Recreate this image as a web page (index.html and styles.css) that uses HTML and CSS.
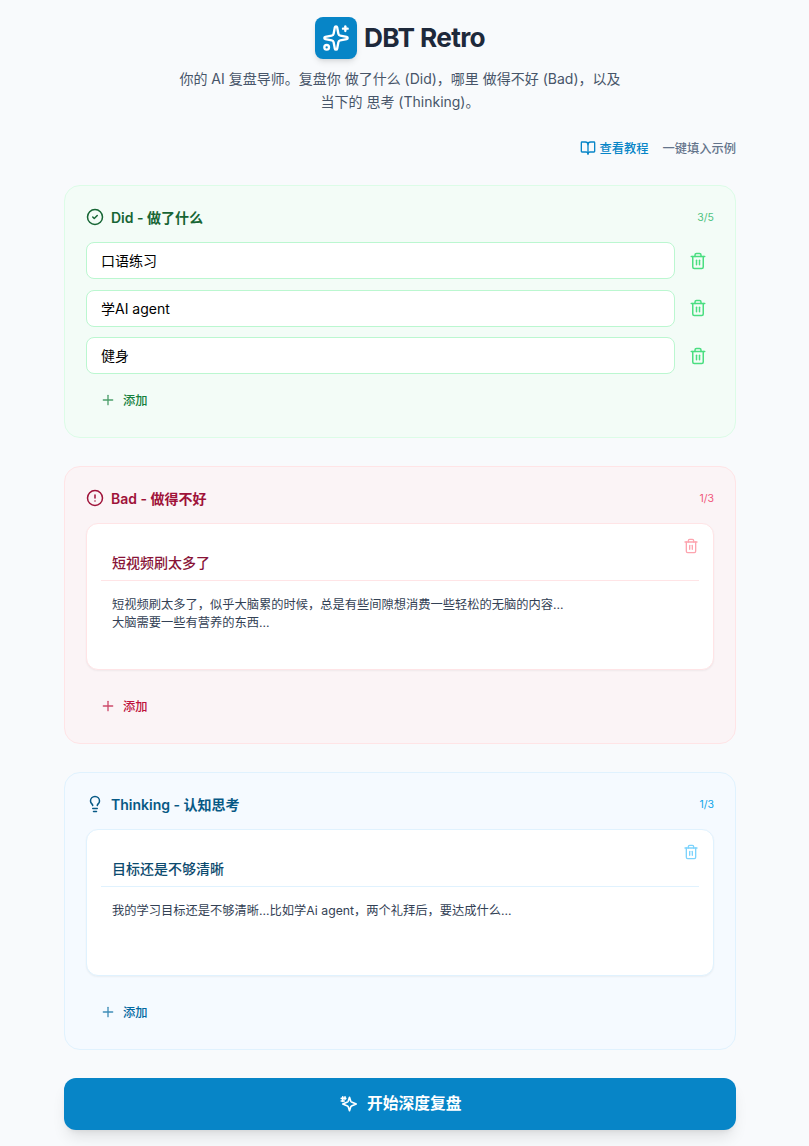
FILE: index.html
```html
<!DOCTYPE html>
<html lang="zh">
<head>
<meta charset="utf-8">
<title>DBT Retro</title>
<link rel="stylesheet" href="styles.css">
</head>
<body>
<main class="page">
  <header class="header">
    <div class="brand">
      <span class="logo">
        <svg class="i" width="28" height="28" viewBox="0 0 24 24"><path d="M11.017 2.814a1 1 0 0 1 1.966 0l1.051 5.558a2 2 0 0 0 1.594 1.594l5.558 1.051a1 1 0 0 1 0 1.966l-5.558 1.051a2 2 0 0 0-1.594 1.594l-1.051 5.558a1 1 0 0 1-1.966 0l-1.051-5.558a2 2 0 0 0-1.594-1.594l-5.558-1.051a1 1 0 0 1 0-1.966l5.558-1.051a2 2 0 0 0 1.594-1.594z"/><path d="M20 2v4"/><path d="M22 4h-4"/><circle cx="4" cy="20" r="2"/></svg>
      </span>
      <h1 class="brand-name">DBT Retro</h1>
    </div>
    <p class="lead">你的 AI 复盘导师。复盘你 做了什么 (Did)，哪里 做得不好 (Bad)，以及<br>当下的 思考 (Thinking)。</p>
  </header>

  <nav class="tools">
    <a class="tool tool-blue">
      <svg class="i" width="16" height="16" viewBox="0 0 24 24"><path d="M12 7v14"/><path d="M3 18a1 1 0 0 1-1-1V4a1 1 0 0 1 1-1h5a4 4 0 0 1 4 4 4 4 0 0 1 4-4h5a1 1 0 0 1 1 1v13a1 1 0 0 1-1 1h-6a3 3 0 0 0-3 3 3 3 0 0 0-3-3z"/></svg>
      查看教程
    </a>
    <a class="tool">一键填入示例</a>
  </nav>

  <section class="panel did">
    <div class="panel-head">
      <h2 class="panel-title">
        <svg class="i" width="18" height="18" viewBox="0 0 24 24"><circle cx="12" cy="12" r="10"/><path d="m9 12 2 2 4-4"/></svg>
        Did - 做了什么
      </h2>
      <span class="count">3/5</span>
    </div>
    <div class="rows">
      <div class="row">
        <div class="field">口语练习</div>
        <svg class="i trash" width="18" height="18" viewBox="0 0 24 24"><path d="M3 6h18"/><path d="M19 6v14c0 1-1 2-2 2H7c-1 0-2-1-2-2V6"/><path d="M8 6V4c0-1 1-2 2-2h4c1 0 2 1 2 2v2"/><path d="M10 11v6"/><path d="M14 11v6"/></svg>
      </div>
      <div class="row">
        <div class="field">学AI agent</div>
        <svg class="i trash" width="18" height="18" viewBox="0 0 24 24"><path d="M3 6h18"/><path d="M19 6v14c0 1-1 2-2 2H7c-1 0-2-1-2-2V6"/><path d="M8 6V4c0-1 1-2 2-2h4c1 0 2 1 2 2v2"/><path d="M10 11v6"/><path d="M14 11v6"/></svg>
      </div>
      <div class="row">
        <div class="field">健身</div>
        <svg class="i trash" width="18" height="18" viewBox="0 0 24 24"><path d="M3 6h18"/><path d="M19 6v14c0 1-1 2-2 2H7c-1 0-2-1-2-2V6"/><path d="M8 6V4c0-1 1-2 2-2h4c1 0 2 1 2 2v2"/><path d="M10 11v6"/><path d="M14 11v6"/></svg>
      </div>
    </div>
    <div class="add">
      <svg class="i plus" width="16" height="16" viewBox="0 0 24 24"><path d="M5 12h14"/><path d="M12 5v14"/></svg>
      添加
    </div>
  </section>

  <section class="panel bad">
    <div class="panel-head">
      <h2 class="panel-title">
        <svg class="i" width="18" height="18" viewBox="0 0 24 24"><circle cx="12" cy="12" r="10"/><path d="M12 8v4"/><path d="M12 16h.01"/></svg>
        Bad - 做得不好
      </h2>
      <span class="count">1/3</span>
    </div>
    <article class="card">
      <svg class="i card-trash" width="16" height="16" viewBox="0 0 24 24"><path d="M3 6h18"/><path d="M19 6v14c0 1-1 2-2 2H7c-1 0-2-1-2-2V6"/><path d="M8 6V4c0-1 1-2 2-2h4c1 0 2 1 2 2v2"/><path d="M10 11v6"/><path d="M14 11v6"/></svg>
      <h3 class="card-title">短视频刷太多了</h3>
      <p class="card-text">短视频刷太多了，似乎大脑累的时候，总是有些间隙想消费一些轻松的无脑的内容...<br>大脑需要一些有营养的东西...</p>
    </article>
    <div class="add">
      <svg class="i plus" width="16" height="16" viewBox="0 0 24 24"><path d="M5 12h14"/><path d="M12 5v14"/></svg>
      添加
    </div>
  </section>

  <section class="panel thinking">
    <div class="panel-head">
      <h2 class="panel-title">
        <svg class="i" width="18" height="18" viewBox="0 0 24 24"><path d="M15 14c.2-1 .7-1.7 1.5-2.5 1-.9 1.5-2.2 1.5-3.5A6 6 0 0 0 6 8c0 1 .2 2.2 1.5 3.500.7.7 1.3 1.500 1.500 2.500"/><path d="M9 18h6"/><path d="M10 22h4"/></svg>
        Thinking - 认知思考
      </h2>
      <span class="count">1/3</span>
    </div>
    <article class="card">
      <svg class="i card-trash" width="16" height="16" viewBox="0 0 24 24"><path d="M3 6h18"/><path d="M19 6v14c0 1-1 2-2 2H7c-1 0-2-1-2-2V6"/><path d="M8 6V4c0-1 1-2 2-2h4c1 0 2 1 2 2v2"/><path d="M10 11v6"/><path d="M14 11v6"/></svg>
      <h3 class="card-title">目标还是不够清晰</h3>
      <p class="card-text">我的学习目标还是不够清晰...比如学Ai agent，两个礼拜后，要达成什么...</p>
    </article>
    <div class="add">
      <svg class="i plus" width="16" height="16" viewBox="0 0 24 24"><path d="M5 12h14"/><path d="M12 5v14"/></svg>
      添加
    </div>
  </section>

  <button class="start" type="button">
    <svg class="i start-icon" width="18" height="18" viewBox="0 0 24 24"><path d="M14 3l1.700 5.300a2 2 0 0 0 1 1L23 12l-6.300 2.700a2 2 0 0 0-1 1L14 21l-1.700-5.300a2 2 0 0 0-1-1L5 12l6.300-2.700a2 2 0 0 0 1-1z"/><path d="M3 4.500h6"/><path d="M3 8h4"/><path d="M5 2.500v6"/><path d="M8 2.500v3"/></svg>
    <span class="start-label">开始深度复盘</span>
  </button>
</main>
</body>
</html>
```
FILE: styles.css
```css
* { box-sizing: border-box; }

html, body {
  margin: 0;
  height: 1146px;
  overflow: hidden;
  background: #f8fafc;
}

body {
  font-family: Inter, "Noto Sans CJK SC", sans-serif;
  color: #1e293b;
}

.i {
  fill: none;
  stroke: currentColor;
  stroke-width: 2;
  stroke-linecap: round;
  stroke-linejoin: round;
  flex: none;
  display: block;
}

.page {
  width: 800px;
  padding: 17px 64px 0;
  display: flex;
  flex-direction: column;
}

.header {
  display: flex;
  flex-direction: column;
  align-items: center;
}

.brand {
  display: flex;
  align-items: center;
  gap: 7px;
}

.logo {
  width: 42px;
  height: 42px;
  border-radius: 8px;
  background: #0785c7;
  color: #fff;
  display: flex;
  align-items: center;
  justify-content: center;
  box-shadow: 0 4px 6px -1px rgba(0, 0, 0, .1), 0 2px 4px -2px rgba(0, 0, 0, .1);
}

.brand-name {
  margin: 0;
  font-size: 26.25px;
  line-height: 42px;
  font-weight: 700;
  letter-spacing: -.656px;
  color: #1e293b;
}

.lead {
  margin: 9px 0 0;
  font-size: 14px;
  line-height: 22.75px;
  color: #475569;
  text-align: center;
}

.tools {
  display: flex;
  justify-content: flex-end;
  gap: 14px;
  margin-top: 24.5px;
  height: 20px;
  align-items: center;
}

.tool {
  display: flex;
  align-items: center;
  gap: 3.5px;
  font-size: 12.25px;
  font-weight: 500;
  color: #64748b;
}

.tool-blue { color: #0785c7; }

.panel {
  border: 1px solid;
  border-radius: 16px;
  padding: 21px;
  margin-bottom: 28px;
}

.did { margin-top: 27px; height: 253px; background: #f3fcf7; border-color: #dcfce7; color: #166534; }
.bad { height: 278px; background: #fbf4f6; border-color: #ffe4e6; color: #9f1239; }
.thinking { height: 278px; background: #f5faff; border-color: #e0f2fe; color: #075985; }

.panel-head {
  display: flex;
  align-items: center;
  justify-content: space-between;
  height: 20px;
  margin-bottom: 15px;
}

.panel-title {
  margin: 0;
  display: flex;
  align-items: center;
  gap: 7px;
  font-size: 14px;
  font-weight: 600;
}

.count { font-size: 10.5px; }
.did .count { color: #4ec27f; }
.bad .count { color: #f0577a; }
.thinking .count { color: #0ea5e9; }

.rows {
  display: flex;
  flex-direction: column;
  gap: 10.5px;
}

.row {
  display: flex;
  align-items: center;
  gap: 14px;
}

.field {
  flex: 1;
  height: 37px;
  padding: 0 14px 1px;
  display: flex;
  align-items: center;
  background: #fff;
  border: 1px solid #bbf7d0;
  border-radius: 8px;
  font-size: 14px;
  color: #000;
}

.trash {
  margin: 0 7px 0 0;
  color: #4ade80;
}

.add {
  display: flex;
  align-items: center;
  gap: 7px;
  height: 32px;
  margin: 9.5px 0 0 14px;
  font-size: 12.25px;
  font-weight: 500;
}

.card + .add { margin-top: 9px; }

.did .add { color: #15803d; }
.bad .add { color: #be123c; }
.thinking .add { color: #0369a1; }

.plus { opacity: .75; }

.card {
  position: relative;
  height: 147px;
  background: #fff;
  border: 1px solid;
  border-radius: 12px;
  padding: 26px 14px 0;
  box-shadow: 0 1px 2px rgba(0, 0, 0, .05);
  margin-bottom: 20px;
}

.bad .card { border-color: #ffe4e6; }
.thinking .card { border-color: #e0f2fe; }

.card-trash {
  position: absolute;
  top: 14px;
  right: 14px;
}

.bad .card-trash { color: #fda4af; }
.thinking .card-trash { color: #7dd3fc; }

.card-title {
  margin: 0;
  padding: 0 11px 4px;
  font-size: 14px;
  line-height: 26px;
  font-weight: 500;
  border-bottom: 1px solid;
}

.bad .card-title { color: #881337; border-color: #ffe4e6; }
.thinking .card-title { color: #0c4a6e; border-color: #e0f2fe; }

.card-text {
  margin: 14.5px 0 0;
  padding: 0 11px;
  font-size: 12.25px;
  line-height: 18px;
  color: #334155;
}

.start {
  height: 52px;
  width: 100%;
  border: 0;
  border-radius: 12px;
  background: #0785c7;
  color: #fff;
  font-family: inherit;
  font-size: 15.75px;
  font-weight: 600;
  display: flex;
  align-items: center;
  justify-content: center;
  gap: 10.5px;
  box-shadow: 0 10px 15px -3px rgba(0, 0, 0, .1), 0 4px 6px -4px rgba(0, 0, 0, .1);
}

.start-label { margin-bottom: 3px; }
.start-icon { stroke-width: 2.2; }
```
